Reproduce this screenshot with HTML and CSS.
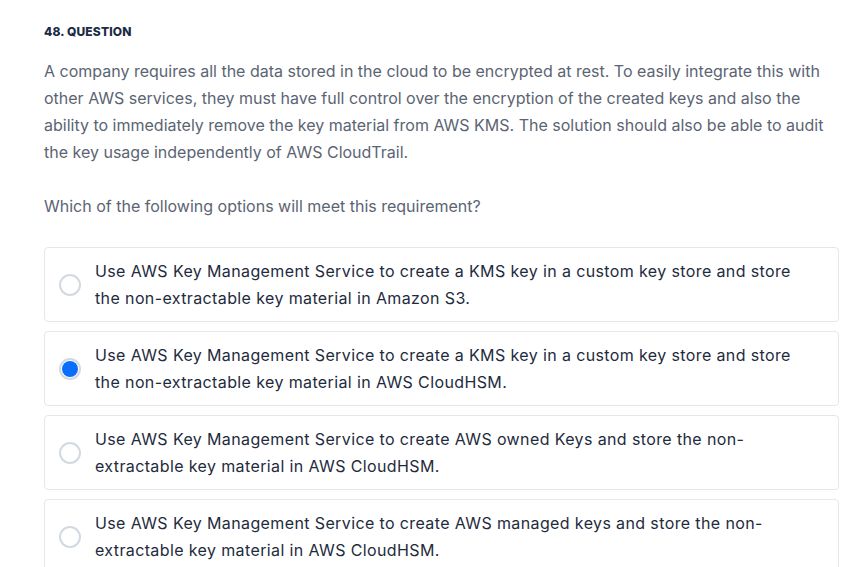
FILE: index.html
```html
<!DOCTYPE html>
<html>
<head>
<meta charset="utf-8">
<link rel="stylesheet" href="styles.css">
</head>
<body>
<div class="wrap">
  <div class="qnum">48. QUESTION</div>
  <p class="qtext">A company requires all the data stored in the cloud to be encrypted at rest. To easily integrate this with other AWS services, they must have full control over the encryption of the created keys and also the ability to immediately remove the key material from AWS KMS. The solution should also be able to audit the key usage independently of AWS CloudTrail.<br><br>Which of the following options will meet this requirement?</p>
  <div class="options">
    <label class="opt"><span class="radio"></span><span class="otext">Use AWS Key Management Service to create a KMS key in a custom key store and store the non-extractable key material in Amazon S3.</span></label>
    <label class="opt"><span class="radio checked"></span><span class="otext">Use AWS Key Management Service to create a KMS key in a custom key store and store the non-extractable key material in AWS CloudHSM.</span></label>
    <label class="opt"><span class="radio"></span><span class="otext">Use AWS Key Management Service to create AWS owned Keys and store the non-extractable key material in AWS CloudHSM.</span></label>
    <label class="opt"><span class="radio"></span><span class="otext">Use AWS Key Management Service to create AWS managed keys and store the non-extractable key material in AWS CloudHSM.</span></label>
  </div>
</div>
</body>
</html>
```
FILE: styles.css
```css
html, body { margin: 0; padding: 0; background: #fff; }
body { font-family: Inter, "Noto Sans", sans-serif; }
.wrap { width: 795px; padding: 24px 0 0 44px; }
.qnum { font-size: 12px; font-weight: 800; letter-spacing: 0.15px; color: #1b2a45; line-height: 16px; }
.qtext { margin: 18px 0 0; font-size: 16px; line-height: 27px; color: #5b6473; }
.options { display: flex; flex-direction: column; gap: 9px; margin-top: 27px; }
.opt { display: flex; align-items: center; gap: 14px; border: 1px solid #e4e7eb; border-radius: 4px; padding: 10px 30px 9px 14px; }
.radio { flex: none; width: 22px; height: 22px; box-sizing: border-box; border: 2px solid #d3d9e2; border-radius: 50%; background: #fff; position: relative; }
.radio.checked::after { content: ""; position: absolute; inset: 1px; border-radius: 50%; background: #0a6efd; }
.otext { font-size: 16px; font-weight: 400; letter-spacing: 0.38px; line-height: 27px; color: #1e2b3d; }
```
